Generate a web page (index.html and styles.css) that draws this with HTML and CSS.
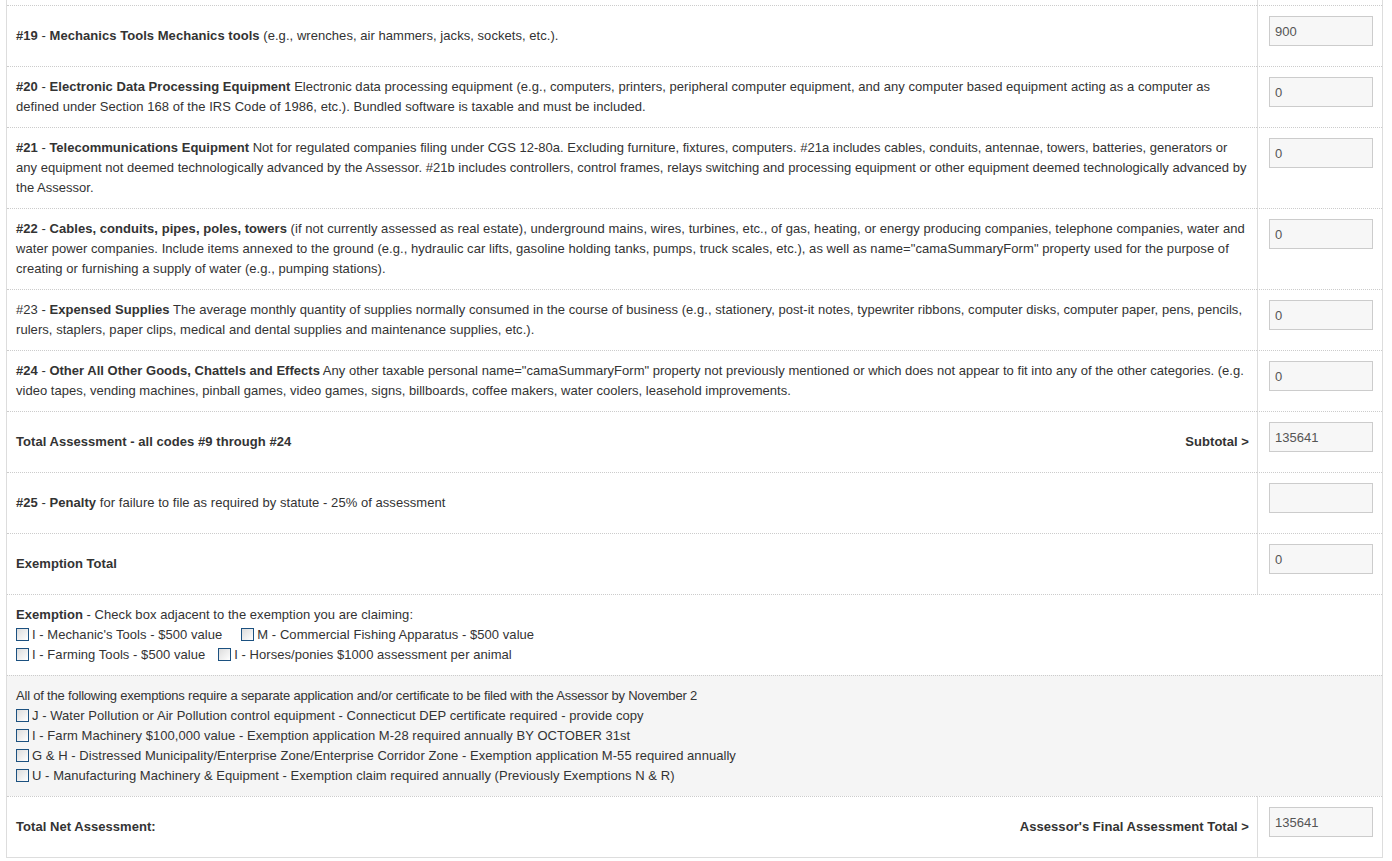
FILE: index.html
```html
<!DOCTYPE html>
<html lang="en">
<head>
    <title>Personal Property Declaration</title>
    <link rel="stylesheet" href="styles.css">
</head>
<body>
    <div class="page">
        <table class="decl-table">
            <!-- tail of the previous row, scrolled off -->
            <tr class="stub">
                <td class="desc"></td>
                <td class="val"></td>
            </tr>

            <tr>
                <td class="desc"><b>#19</b> - <b>Mechanics Tools Mechanics tools</b> (e.g., wrenches, air hammers, jacks, sockets, etc.).</td>
                <td class="val"><input type="text" class="amount" value="900"></td>
            </tr>
            <tr>
                <td class="desc"><b>#20</b> - <b>Electronic Data Processing Equipment</b> Electronic data processing equipment (e.g., computers, printers, peripheral computer equipment, and any computer based equipment acting as a computer as defined under Section 168 of the IRS Code of 1986, etc.). Bundled software is taxable and must be included.</td>
                <td class="val"><input type="text" class="amount" value="0"></td>
            </tr>
            <tr>
                <td class="desc tight"><b>#21</b> - <b>Telecommunications Equipment</b> Not for regulated companies filing under CGS 12-80a. Excluding furniture, fixtures, computers. #21a includes cables, conduits, antennae, towers, batteries, generators or any equipment not deemed technologically advanced by the Assessor. #21b includes controllers, control frames, relays switching and processing equipment or other equipment deemed technologically advanced by the Assessor.</td>
                <td class="val"><input type="text" class="amount" value="0"></td>
            </tr>
            <tr>
                <td class="desc"><b>#22</b> - <b>Cables, conduits, pipes, poles, towers</b> (if not currently assessed as real estate), underground mains, wires, turbines, etc., of gas, heating, or energy producing companies, telephone companies, water and water power companies. Include items annexed to the ground (e.g., hydraulic car lifts, gasoline holding tanks, pumps, truck scales, etc.), as well as name="camaSummaryForm" property used for the purpose of creating or furnishing a supply of water (e.g., pumping stations).</td>
                <td class="val"><input type="text" class="amount" value="0"></td>
            </tr>
            <tr>
                <td class="desc">#23 - <b>Expensed Supplies</b> The average monthly quantity of supplies normally consumed in the course of business (e.g., stationery, post-it notes, typewriter ribbons, computer disks, computer paper, pens, pencils, rulers, staplers, paper clips, medical and dental supplies and maintenance supplies, etc.).</td>
                <td class="val"><input type="text" class="amount" value="0"></td>
            </tr>
            <tr>
                <td class="desc tight"><b>#24</b> - <b>Other All Other Goods, Chattels and Effects</b> Any other taxable personal name="camaSummaryForm" property not previously mentioned or which does not appear to fit into any of the other categories. (e.g. video tapes, vending machines, pinball games, video games, signs, billboards, coffee makers, water coolers, leasehold improvements.</td>
                <td class="val"><input type="text" class="amount" value="0"></td>
            </tr>
            <tr>
                <td class="desc">
                    <div class="split">
                        <b>Total Assessment - all codes #9 through #24</b>
                        <b>Subtotal &gt;</b>
                    </div>
                </td>
                <td class="val"><input type="text" class="amount" value="135641"></td>
            </tr>
            <tr>
                <td class="desc"><b>#25</b> - <b>Penalty</b> for failure to file as required by statute - 25% of assessment</td>
                <td class="val"><input type="text" class="amount" value=""></td>
            </tr>
            <tr>
                <td class="desc"><b>Exemption Total</b></td>
                <td class="val"><input type="text" class="amount" value="0"></td>
            </tr>

            <!-- exemptions claimed -->
            <tr>
                <td class="full" colspan="2">
                    <b>Exemption</b> - Check box adjacent to the exemption you are claiming:<br>
                    <label class="chk chk-wide"><input type="checkbox">I - Mechanic's Tools - $500 value</label><label class="chk"><input type="checkbox">M - Commercial Fishing Apparatus - $500 value</label><br>
                    <label class="chk chk-mid"><input type="checkbox">I - Farming Tools - $500 value</label><label class="chk"><input type="checkbox">I - Horses/ponies $1000 assessment per animal</label>
                </td>
            </tr>
            <tr class="shaded">
                <td class="full" colspan="2">
                    <span class="note">All of the following exemptions require a separate application and/or certificate to be filed with the Assessor by November 2</span><br>
                    <label class="chk"><input type="checkbox">J - Water Pollution or Air Pollution control equipment - Connecticut DEP certificate required - provide copy</label><br>
                    <label class="chk"><input type="checkbox">I - Farm Machinery $100,000 value - Exemption application M-28 required annually BY OCTOBER 31st</label><br>
                    <label class="chk"><input type="checkbox">G &amp; H - Distressed Municipality/Enterprise Zone/Enterprise Corridor Zone - Exemption application M-55 required annually</label><br>
                    <label class="chk"><input type="checkbox">U - Manufacturing Machinery &amp; Equipment - Exemption claim required annually (Previously Exemptions N &amp; R)</label>
                </td>
            </tr>

            <tr>
                <td class="desc">
                    <div class="split">
                        <b>Total Net Assessment:</b>
                        <b>Assessor's Final Assessment Total &gt;</b>
                    </div>
                </td>
                <td class="val"><input type="text" class="amount" value="135641"></td>
            </tr>
        </table>
    </div>
</body>
</html>
```

FILE: styles.css
```css
body {
    font-family: "Liberation Sans", Arial, sans-serif;
    font-size: 13px;
    line-height: 20px;
    letter-spacing: 0.05px;
    color: #333;
    background-color: #fff;
    margin: 0;
    padding: 0;
}

.page {
    padding: 0 9px 0 6px;
}

.decl-table {
    width: 1377px;
    border-collapse: separate;
    border-spacing: 0;
    border: 1px solid #ddd;
    border-top: none;
}

.decl-table td {
    border-top: 1px dotted #ccc;
}

.decl-table b {
    font-weight: bold;
}

.desc {
    padding: 10px 8px 10px 9px;
    vertical-align: middle;
}

.tight {
    letter-spacing: 0.02px;
}

.val {
    width: 104px;
    padding: 10px 9px 10px 11px;
    vertical-align: top;
    border-left: 1px solid #ddd;
}

.stub td {
    height: 5px;
    padding-top: 0;
    padding-bottom: 0;
    border-top: none;
}

.amount {
    display: block;
    box-sizing: border-box;
    width: 104px;
    height: 30px;
    margin: 0 0 10px 0;
    padding: 4px 5px;
    font-family: "Liberation Sans", Arial, sans-serif;
    font-size: 13px;
    line-height: 20px;
    color: #555;
    background-color: #f7f7f7;
    border: 1px solid #ccc;
    border-radius: 0;
    outline: none;
}

.split {
    display: flex;
    justify-content: space-between;
}

.full {
    padding: 10px 8px 10px 9px;
}

.shaded td {
    background-color: #f5f5f5;
}

.note {
    letter-spacing: -0.2px;
}

.chk {
    display: inline-block;
}

.chk-wide {
    margin-right: 19px;
}

.chk-mid {
    margin-right: 13px;
}

.chk input {
    -webkit-appearance: none;
    appearance: none;
    box-sizing: border-box;
    width: 13px;
    height: 13px;
    margin: 0 3px 0 0;
    vertical-align: -2px;
    border: 1px solid #1c5180;
    background: linear-gradient(135deg, #dcdcdc 0%, #f4f4f4 70%, #fff 100%);
}
```
